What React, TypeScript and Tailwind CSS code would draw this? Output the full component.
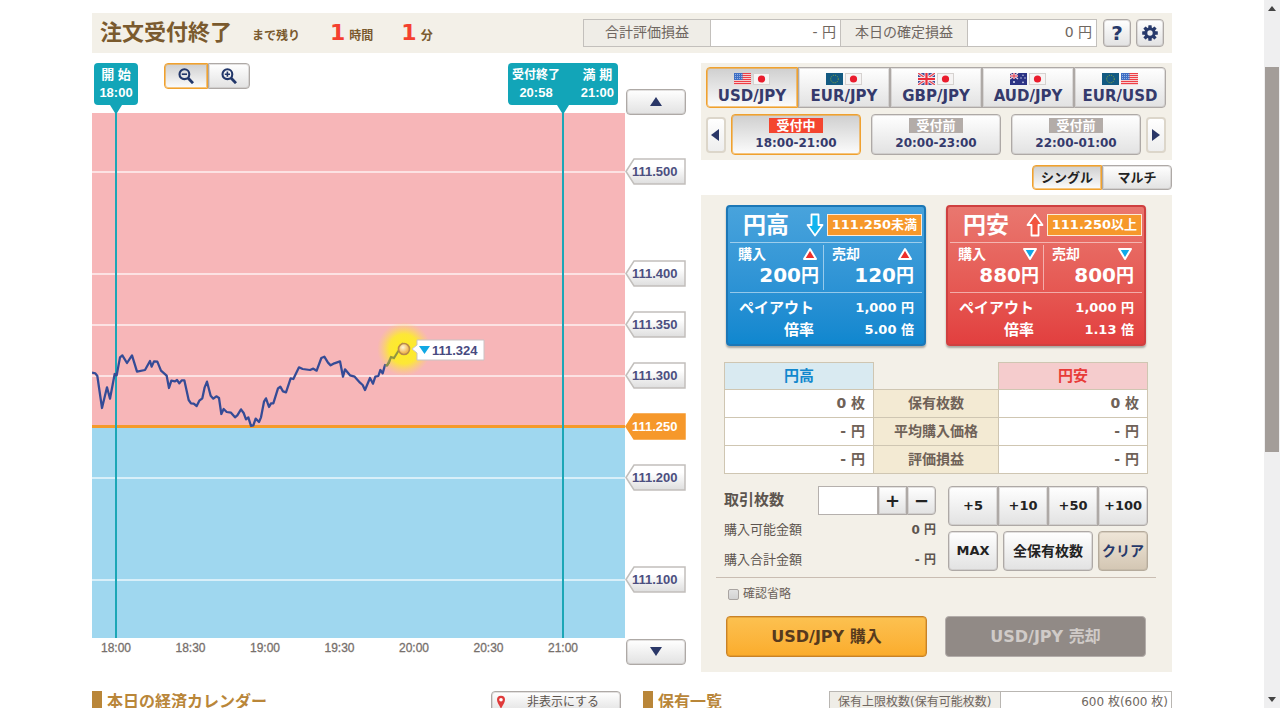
import { useState } from "react";
import type { ReactNode } from "react";

const raised = "bg-linear-to-b from-white to-[#e2e2e2] border border-[#aea9a6] ring-1 ring-inset ring-[#aea9a6]/35";
const pressed = "bg-linear-to-b from-[#cfcfcf] to-[#fcfcfc] border border-[#f0a12e] ring-1 ring-inset ring-[#f0a12e]/60";

type Code = "US" | "JP" | "EU" | "GB" | "AU";

function Flag({ code }: { code: Code }) {
  return (
    <svg viewBox="0 0 17 12" className="h-3 w-[17px]" aria-hidden="true">
      {code === "US" && (
        <>
          <rect width="17" height="12" fill="#f7dfe0" />
          {[0, 2, 4, 6, 8, 10].map((y) => (
            <rect key={y} y={y} width="17" height="1.1" fill="#ee3e46" />
          ))}
          <rect width="8.5" height="7" fill="#3f6fc4" />
          {[1.5, 3.5, 5.5].map((y) => (
            <path key={y} d={`M1 ${y}h7`} stroke="#b9d0f2" strokeWidth=".7" strokeDasharray="1 1" />
          ))}
        </>
      )}
      {code === "JP" && (
        <>
          <rect x=".5" y=".5" width="16" height="11" fill="#f6f4f4" stroke="#d6d2d0" />
          <circle cx="8.5" cy="6" r="3.6" fill="#ea1c2d" />
        </>
      )}
      {code === "EU" && (
        <>
          <rect width="17" height="12" fill="#135a82" />
          <circle cx="8.5" cy="6" r="3.8" fill="none" stroke="#8ba83c" strokeWidth="1" strokeDasharray="1 1" />
        </>
      )}
      {code === "GB" && (
        <>
          <rect width="17" height="12" fill="#3d4f9c" />
          <path d="M0 0l17 12M17 0L0 12" stroke="#f3e3e8" strokeWidth="3" />
          <path d="M0 0l17 12M17 0L0 12" stroke="#e8434f" strokeWidth="1.2" />
          <path d="M8.5 0v12M0 6h17" stroke="#f3e3e8" strokeWidth="4" />
          <path d="M8.5 0v12M0 6h17" stroke="#ea2f3c" strokeWidth="2.2" />
        </>
      )}
      {code === "AU" && (
        <>
          <rect width="17" height="12" fill="#2b3384" />
          <path d="M0 0l8 6M8 0L0 6" stroke="#eddbe6" strokeWidth="1.2" />
          <path d="M4 0v6M0 3h8" stroke="#eddbe6" strokeWidth="2" />
          <path d="M4 0v6M0 3h8" stroke="#e03848" strokeWidth="1" />
          <g fill="#dfe2f4">
            <circle cx="4" cy="9" r="1" />
            <circle cx="13" cy="2.3" r=".7" />
            <circle cx="11" cy="5" r=".7" />
            <circle cx="15" cy="5" r=".7" />
            <circle cx="13" cy="9.4" r=".8" />
          </g>
        </>
      )}
    </svg>
  );
}

function Triangle({ dir, className = "" }: { dir: "up" | "down" | "left" | "right"; className?: string }) {
  const d = {
    up: "M6 1L12 10H0Z",
    down: "M0 1H12L6 10Z",
    left: "M1 6L9 0V12Z",
    right: "M10 6L2 0V12Z",
  }[dir];
  return (
    <svg viewBox="0 0 12 12" className={`size-3 ${className}`} fill="#2a3768" aria-hidden="true">
      <path d={d} />
    </svg>
  );
}

function Magnifier({ plus }: { plus?: boolean }) {
  return (
    <svg viewBox="0 0 16 16" className="size-4" fill="none" stroke="#22376a" aria-hidden="true">
      <circle cx="6.4" cy="6.2" r="4.9" strokeWidth="2.1" />
      <path d="M10 10L15 15.2" strokeWidth="2.8" />
      <path d={plus ? "M3.8 6.2h5.2M6.4 3.6v5.2" : "M3.8 6.2h5.2"} strokeWidth="1.6" />
    </svg>
  );
}

function Gear() {
  return (
    <svg viewBox="-8 -8 16 16" className="size-4" aria-hidden="true">
      <g fill="#27396a">
        {[0, 45, 90, 135].map((a) => (
          <rect key={a} x="-1.7" y="-7.8" width="3.4" height="15.6" rx=".5" transform={`rotate(${a})`} />
        ))}
        <circle r="5.7" />
      </g>
      <circle r="2.7" fill="#f0f0f0" />
    </svg>
  );
}

function Header() {
  return (
    <header className="flex h-10 items-center bg-[#f3f0e8] pr-2 pl-2 text-[#7a5a2e]">
      <div className="flex items-baseline font-bold leading-8">
        <h1 className="text-[22px]">注文受付終了</h1>
        <span className="ml-5 text-xs">まで残り</span>
        <strong className="ml-[30px] text-[22px] text-[#f4402f]">1</strong>
        <span className="ml-1 text-xs">時間</span>
        <strong className="ml-7 text-[22px] text-[#f4402f]">1</strong>
        <span className="ml-1 text-xs">分</span>
      </div>
      <dl className="ml-auto grid h-7 grid-cols-[127px_129px_128px_128px] border border-[#c3c0bc] text-sm leading-6 text-[#6f6761]">
        <dt className="border-r border-[#c3c0bc] bg-[#efede7] text-center">合計評価損益</dt>
        <dd className="bg-white pr-1 text-right">- 円</dd>
        <dt className="border-x border-[#c3c0bc] bg-[#efede7] text-center">本日の確定損益</dt>
        <dd className="bg-white pr-1 text-right">0 円</dd>
      </dl>
      <button aria-label="ヘルプ" className={`${raised} ml-[6px] flex size-7 items-center justify-center rounded text-xl leading-none font-bold text-[#27396a]`}>
        ?
      </button>
      <button aria-label="設定" className={`${raised} ml-[5px] flex size-7 items-center justify-center rounded`}>
        <Gear />
      </button>
    </header>
  );
}

const trace =
  "36,128 46,130 52,138 66,234 81,172 90,206 104,132 110,136 120,82 127,76 141,99 156,76 171,125 195,120 210,93 215,110 222,94 232,95 243,122 260,137 267,174 274,152 285,154 291,150 298,160 305,151 313,151 326,210 333,220 341,221 350,228 358,212 367,205 374,172 381,155 392,197 400,206 409,199 417,204 424,252 431,237 440,246 453,248 465,262 472,256 483,238 491,249 498,268 505,262 513,288 520,286 527,266 537,276 543,262 552,215 558,205 567,231 573,220 580,220 594,175 601,170 609,184 618,187 632,145 640,147 657,112 668,117 690,120 700,116 710,122 724,84 733,80 744,98 752,106 763,100 780,94 789,140 795,118 810,136 824,140 840,158 848,165 855,180 870,144 879,161 886,140 895,138 901,120 908,130 915,105 922,106 932,82 941,86 955,58 968,40";

const times = ["18:00", "18:30", "19:00", "19:30", "20:00", "20:30", "21:00"];

function Plot() {
  return (
    <svg viewBox="0 0 533 550" className="block w-full" role="img" aria-label="USD/JPY チャート">
      <defs>
        <radialGradient id="glow">
          <stop offset="0" stopColor="#ffee1f" />
          <stop offset=".55" stopColor="#fdec2a" stopOpacity=".9" />
          <stop offset="1" stopColor="#fbd56a" stopOpacity="0" />
        </radialGradient>
        <radialGradient id="bead" cx=".4" cy=".35">
          <stop offset="0" stopColor="#fff6d8" />
          <stop offset="1" stopColor="#f2b957" />
        </radialGradient>
      </defs>
      <rect width="533" height="314" fill="#f7b6b8" />
      <rect y="314" width="533" height="211" fill="#9fd7ef" />
      {[58, 160, 211, 262, 364, 466].map((y) => (
        <rect key={y} y={y} width="533" height="2" fill="#fff" fillOpacity=".6" />
      ))}
      <rect y="312" width="533" height="3" fill="#f49a2b" />
      <rect x="23" width="2" height="525" fill="#1ba6b6" />
      <rect x="470" width="2" height="525" fill="#1ba6b6" />
      <polyline
        points={trace}
        transform="translate(-12 217) scale(.33333)"
        fill="none"
        stroke="#354b96"
        strokeWidth="6.8"
        strokeLinejoin="round"
      />
      <circle cx="312" cy="236" r="27" fill="url(#glow)" />
      <path d="M294 253l3-3 2-6 3 1 5-8 4-7" fill="none" stroke="#8f9442" strokeWidth="2" />
      <circle cx="312" cy="236" r="5.5" fill="url(#bead)" stroke="#b98a4b" strokeWidth="1.6" />
      <path d="M320 236l5-4v-5h67v20h-67v-7z" fill="#fff" stroke="#c9c3c4" />
      <path d="M327 233h11l-5.500 8z" fill="#10a8e4" />
      <text x="340" y="242" fontSize="13" fontWeight="700" fill="#474a80" className="font-['Liberation_Sans',sans-serif]">
        111.324
      </text>
      {times.map((t, i) => (
        <text
          key={t}
          x={24 + i * 74.5}
          y="539"
          textAnchor="middle"
          fontSize="12"
          fill="#77706c"
          stroke="#77706c"
          strokeWidth=".3"
          className="font-['Liberation_Sans',sans-serif]"
        >
          {t}
        </text>
      ))}
    </svg>
  );
}

function TimeBadge({ width, children }: { width: string; children: ReactNode }) {
  return (
    <div className="flex h-[50px] flex-col items-center">
      <div
        className={`${width} flex h-[42px] items-center rounded bg-[#12a5b8] px-1 text-center font-['Liberation_Sans','Noto_Sans_CJK_JP',sans-serif] text-[13px] leading-[18px] font-bold text-white`}
      >
        {children}
      </div>
      <svg viewBox="0 0 12 8" className="h-2 w-3" aria-hidden="true">
        <path d="M0 0H12L7 8H5Z" fill="#12a5b8" />
      </svg>
    </div>
  );
}

function PriceTag({ price, strike }: { price: string; strike?: boolean }) {
  return (
    <div className="relative flex h-[27px] w-full items-center pl-[7px]">
      <svg viewBox="0 0 61 27" className="absolute inset-0 size-full" aria-hidden="true">
        <defs>
          <linearGradient id="tag" x1="0" y1="0" x2="0" y2="1">
            <stop offset=".3" stopColor="#fff" />
            <stop offset="1" stopColor="#dedede" />
          </linearGradient>
        </defs>
        <path
          d="M1 13.500L9 1H60V26H9Z"
          fill={strike ? "#f6982b" : "url(#tag)"}
          stroke={strike ? "#f6982b" : "#c2bfbc"}
          strokeWidth="1.500"
        />
      </svg>
      <span
        className={`relative font-['Liberation_Sans',sans-serif] text-[13px] font-bold ${strike ? "text-white" : "text-[#4c4f80]"}`}
      >
        {price}
      </span>
    </div>
  );
}

const scale = ["111.500", "", "111.400", "111.350", "111.300", "111.250", "111.200", "", "111.100"];

function Chart() {
  const [zoom, setZoom] = useState<"out" | "in">("out");
  return (
    <section className="flex min-w-0 flex-1">
      <div className="min-w-0 flex-1">
        <div className="flex pr-[7px] pl-[2px]">
          <TimeBadge width="w-11 justify-center">
            <div>
              開 始<br />18:00
            </div>
          </TimeBadge>
          <div className="ml-[26px] flex h-[26px]">
            <button
              aria-label="縮小"
              onClick={() => setZoom("out")}
              className={`${zoom === "out" ? pressed : raised} flex w-11 items-center justify-center rounded-l`}
            >
              <Magnifier />
            </button>
            <button
              aria-label="拡大"
              onClick={() => setZoom("in")}
              className={`${zoom === "in" ? pressed : raised} flex w-[42px] items-center justify-center rounded-r`}
            >
              <Magnifier plus />
            </button>
          </div>
          <div className="ml-auto">
            <TimeBadge width="w-[110px] justify-between">
              <div>
                <span className="text-xs">受付終了</span>
                <br />
                20:58
              </div>
              <div>
                満 期<br />21:00
              </div>
            </TimeBadge>
          </div>
        </div>
        <Plot />
      </div>
      <div className="flex w-[61px] shrink-0 flex-col pt-[26px]">
        <button aria-label="上へ" className={`${raised} ml-px flex h-[26px] items-center justify-center rounded-sm`}>
          <Triangle dir="up" />
        </button>
        <div className="pt-[31px] pb-[34px]">
          {scale.map((p, i) => (
            <div key={i} className="flex h-[51px] items-center">
              {p && <PriceTag price={p} strike={p === "111.250"} />}
            </div>
          ))}
        </div>
        <button aria-label="下へ" className={`${raised} ml-px flex h-[26px] items-center justify-center rounded-sm`}>
          <Triangle dir="down" />
        </button>
      </div>
    </section>
  );
}

const pairs: { name: string; flags: [Code, Code] }[] = [
  { name: "USD/JPY", flags: ["US", "JP"] },
  { name: "EUR/JPY", flags: ["EU", "JP"] },
  { name: "GBP/JPY", flags: ["GB", "JP"] },
  { name: "AUD/JPY", flags: ["AU", "JP"] },
  { name: "EUR/USD", flags: ["EU", "US"] },
];

const sessions = [
  { status: "受付中", time: "18:00-21:00", open: true },
  { status: "受付前", time: "20:00-23:00", open: false },
  { status: "受付前", time: "22:00-01:00", open: false },
];

function Selector() {
  const [pair, setPair] = useState("USD/JPY");
  const arrow = "flex h-9 w-5 shrink-0 items-center justify-center rounded-sm border-2 border-[#dcd6ca] bg-linear-to-b from-white to-[#eeeeee]";
  return (
    <div className="bg-[#f3f0e8] pt-1 pr-[6px] pb-[5px] pl-[5px]">
      <div className="flex">
        {pairs.map((p) => (
          <button
            key={p.name}
            onClick={() => setPair(p.name)}
            className={`${pair === p.name ? pressed : raised} flex h-[41px] flex-1 flex-col items-center justify-between pt-[5px] pb-px first:rounded-l last:rounded-r`}
          >
            <span className="flex gap-[2px]">
              <Flag code={p.flags[0]} />
              <Flag code={p.flags[1]} />
            </span>
            <span className="text-[15px] leading-5 font-bold text-[#353a6c]">{p.name}</span>
          </button>
        ))}
      </div>
      <div className="mt-[6px] flex items-center gap-[5px]">
        <button aria-label="前へ" className={arrow}>
          <Triangle dir="left" />
        </button>
        <div className="flex flex-1 gap-[10px]">
          {sessions.map((s) => (
            <button
              key={s.time}
              className={`${s.open ? pressed : raised} flex h-[41px] flex-1 flex-col items-center rounded pt-[3px] font-bold`}
            >
              <span className={`${s.open ? "bg-[#f4452f]" : "bg-[#b3aca8]"} w-[54px] text-[13px] leading-[15px] text-white`}>
                {s.status}
              </span>
              <span className="text-xs leading-5 text-[#353a6c]">{s.time}</span>
            </button>
          ))}
        </div>
        <button aria-label="次へ" className={arrow}>
          <Triangle dir="right" />
        </button>
      </div>
    </div>
  );
}

type Side = {
  name: string;
  limit: string;
  cond: string;
  buy: string;
  sell: string;
  ratio: string;
  high: boolean;
};

function Move({ up }: { up: boolean }) {
  return (
    <svg viewBox="0 0 18 14" className="h-[14px] w-[18px]" aria-hidden="true">
      <path
        d={up ? "M9 2L15 12H3Z" : "M3 2H15L9 12Z"}
        fill={up ? "#ee2f2b" : "#10a8e8"}
        stroke="#fff"
        strokeWidth="2"
        strokeLinejoin="round"
      />
    </svg>
  );
}

function PriceCell({ label, value, up }: { label: string; value: string; up: boolean }) {
  return (
    <div className="pr-1 pl-2">
      <div className="flex items-center justify-between text-sm leading-[18px]">
        {label}
        <Move up={up} />
      </div>
      <div className="text-right text-xl leading-6">
        {value}
        <span className="text-lg leading-6">円</span>
      </div>
    </div>
  );
}

function Card({ side }: { side: Side }) {
  const tone = side.high
    ? "border-[#1c77b6] from-[#48a3dc] to-[#0f87cf]"
    : "border-[#cf4040] from-[#e9776f] to-[#e23f3f]";
  return (
    <button
      className={`${tone} min-w-0 flex-1 rounded border-2 bg-linear-to-b px-[2px] text-left font-bold text-white shadow-[0_2px_2px_rgba(0,0,0,0.3)]`}
    >
      <div className="flex h-9 items-center border-b border-white/50">
        <span className="pl-[13px] text-[23px] leading-8">{side.name}</span>
        <svg viewBox="0 0 18 24" className="ml-auto h-6 w-[18px]" aria-hidden="true">
          <path
            d="M5.500 1.500H12.500V12H16.500L9 22.500L1.500 12H5.500Z"
            transform={side.high ? undefined : "rotate(180 9 12)"}
            fill={side.high ? "#12b4ee" : "#f2553f"}
            stroke="#fff"
            strokeWidth="1.800"
            strokeLinejoin="round"
          />
        </svg>
        <span className="ml-[3px] border border-white/80 bg-[#f6982b] px-1 text-[13px] leading-5 whitespace-nowrap">
          {side.limit}
          {side.cond}
        </span>
      </div>
      <div className="grid h-[50px] grid-cols-2 divide-x divide-white/50 border-b border-white/50 py-[2px] pr-1">
        <PriceCell label="購入" value={side.buy} up={side.high} />
        <PriceCell label="売却" value={side.sell} up={side.high} />
      </div>
      <div className="grid h-[51px] grid-cols-[84px_1fr] content-center pr-2 text-right text-[15px] leading-[22px]">
        <span>ペイアウト</span>
        <span className="text-[13px] leading-[22px]">1,000 円</span>
        <span>倍率</span>
        <span className="text-[13px] leading-[22px]">{side.ratio} 倍</span>
      </div>
    </button>
  );
}

const holdings = [
  ["0 枚", "保有枚数"],
  ["- 円", "平均購入価格"],
  ["- 円", "評価損益"],
];

function Holdings() {
  const line = "border border-[#cfc6b2]";
  return (
    <table className="mt-4 w-full table-fixed border-collapse text-[15px] leading-[26px] font-bold text-[#6f6258]">
      <thead>
        <tr>
          <th className={`${line} w-[149px] bg-[#d9eaf1] text-[#1187cd]`}>円高</th>
          <td />
          <th className={`${line} w-[149px] bg-[#f5cccd] text-[#e83a38]`}>円安</th>
        </tr>
      </thead>
      <tbody>
        {holdings.map(([v, label]) => (
          <tr key={label}>
            <td className={`${line} bg-white pr-2 text-right text-sm leading-[27px]`}>{v}</td>
            <th className={`${line} bg-[#f3ead3] text-sm leading-[27px]`}>{label}</th>
            <td className={`${line} bg-white pr-2 text-right text-sm leading-[27px]`}>{v}</td>
          </tr>
        ))}
      </tbody>
    </table>
  );
}

function OrderForm() {
  const [qty, setQty] = useState("");
  const add = (n: number) => setQty(String(Math.max(0, Number(qty) + n)));
  return (
    <div className="mt-3 flex items-start gap-3 text-[#5d554f]">
      <div className="flex-1">
        <div className="flex h-[29px] items-center">
          <label htmlFor="qty" className="flex-1 text-[15px] font-bold">
            取引枚数
          </label>
          <input
            id="qty"
            value={qty}
            onChange={(e) => setQty(e.target.value)}
            className="h-full w-[60px] border border-[#b5b0ad] bg-white px-1 text-right text-sm"
          />
          <button aria-label="増やす" onClick={() => add(1)} className={`${raised} flex h-full w-[29px] items-center justify-center text-lg leading-none font-bold text-[#222]`}>
            +
          </button>
          <button aria-label="減らす" onClick={() => add(-1)} className={`${raised} flex h-full w-[29px] items-center justify-center rounded-r text-lg leading-none font-bold text-[#222]`}>
            −
          </button>
        </div>
        <dl className="grid grid-cols-2 text-[13px] leading-[30px]">
          <dt>購入可能金額</dt>
          <dd className="text-right text-xs leading-[30px] font-bold">0 円</dd>
          <dt>購入合計金額</dt>
          <dd className="text-right text-xs leading-[30px] font-bold">- 円</dd>
        </dl>
      </div>
      <div className="w-[200px] shrink-0 text-[13px] font-bold text-[#222]">
        <div className="flex h-10">
          {[5, 10, 50, 100].map((n) => (
            <button key={n} onClick={() => add(n)} className={`${raised} w-[50px] whitespace-nowrap first:rounded-l last:rounded-r`}>
              +{n}
            </button>
          ))}
        </div>
        <div className="mt-[5px] flex h-10 justify-between">
          <button className={`${raised} w-[50px] rounded`}>MAX</button>
          <button className={`${raised} w-[90px] rounded text-sm`}>全保有枚数</button>
          <button onClick={() => setQty("")} className="w-[50px] rounded border border-[#b5ab9c] bg-linear-to-b from-[#efe6d8] to-[#d3c6b3] text-sm text-[#27396a] ring-1 ring-[#b5ab9c]/40 ring-inset">
            クリア
          </button>
        </div>
      </div>
    </div>
  );
}

function OrderPanel() {
  const [mode, setMode] = useState("シングル");
  return (
    <section className="w-[471px] shrink-0">
      <Selector />
      <div className="mt-[5px] flex h-[25px] justify-end text-[13px] font-bold text-[#222]">
        {["シングル", "マルチ"].map((m) => (
          <button key={m} onClick={() => setMode(m)} className={`${mode === m ? pressed : raised} w-[70px] leading-5 first:rounded-l last:rounded-r`}>
            {m}
          </button>
        ))}
      </div>
      <div className="mt-[5px] bg-[#f3f0e8] pt-[10px] pr-4 pb-[15px] pl-[15px]">
        <div className="pr-2 pl-2">
          <div className="flex gap-5 px-[2px]">
            <Card side={{ name: "円高", limit: "111.250", cond: "未満", buy: "200", sell: "120", ratio: "5.00", high: true }} />
            <Card side={{ name: "円安", limit: "111.250", cond: "以上", buy: "880", sell: "800", ratio: "1.13", high: false }} />
          </div>
          <Holdings />
          <OrderForm />
        </div>
        <hr className="mt-[2px] border-[#c9bdb2]" />
        <label className="mt-[6px] flex items-center gap-1 pl-3 text-xs leading-5 text-[#6b625b]">
          <input
            type="checkbox"
            className="size-[11px] appearance-none rounded-xs border border-[#a9a4a1] bg-linear-to-b from-[#e2e2e2] to-[#d2d2d2] checked:from-[#f0a12e]"
          />
          確認省略
        </label>
        <div className="mt-3 flex gap-[18px] px-[10px] text-base font-bold">
          <button className="h-[41px] flex-1 rounded border border-[#c98226] bg-linear-to-b from-[#fcc150] to-[#fbac2b] text-[#573a1d] ring-1 ring-[#c98226]/40 ring-inset">
            USD/JPY 購入
          </button>
          <button className="h-[41px] flex-1 rounded-sm border border-[#b3adaa] bg-[#918a86] text-[#d0cbc8]">
            USD/JPY 売却
          </button>
        </div>
      </div>
    </section>
  );
}

function Lower() {
  const heading = "border-l-[10px] border-[#b98639] pl-[5px] text-base leading-[22px] font-bold text-[#b98639]";
  return (
    <div className="mt-[19px] flex items-start">
      <h2 className={heading}>本日の経済カレンダー</h2>
      <button className={`${raised} ml-auto flex h-[22px] w-[130px] items-center rounded-sm pl-1 text-xs text-[#5d554f]`}>
        <svg viewBox="0 0 10 14" className="h-[14px] w-[10px]" aria-hidden="true">
          <path d="M5 14C3.500 10 1 8 1 4.800a4 4 0 0 1 8 0C9 8 6.500 10 5 14Z" fill="#e03a3a" />
          <circle cx="5" cy="4.800" r="1.800" fill="#fff" />
        </svg>
        <span className="flex-1 text-center">非表示にする</span>
      </button>
      <section className="ml-[22px] flex w-[529px] items-start justify-between">
        <h2 className={heading}>保有一覧</h2>
        <dl className="grid w-[343px] grid-cols-2 border border-[#b9b6b2] text-xs leading-5 text-[#6f6761]">
          <dt className="border-r border-[#b9b6b2] bg-[#efede7] text-center whitespace-nowrap">保有上限枚数(保有可能枚数)</dt>
          <dd className="bg-white pr-[3px] text-right">600 枚(600 枚)</dd>
        </dl>
      </section>
    </div>
  );
}

function ScrollTrack() {
  return (
    <div className="flex w-4 shrink-0 flex-col items-center bg-[#efeff0]" aria-hidden="true">
      <div className="flex h-[67px] pt-[6px]">
        <svg viewBox="0 0 8 5" className="h-[5px] w-2"><path d="M4 0L8 5H0Z" fill="#444" /></svg>
      </div>
      <div className="h-[385px] w-[14px] bg-[#a39d99]" />
      <svg viewBox="0 0 8 5" className="mt-auto mb-[6px] h-[5px] w-2"><path d="M0 0H8L4 5Z" fill="#444" /></svg>
    </div>
  );
}

export default function App() {
  return (
    <div className="flex h-screen bg-white font-['DejaVu_Sans','Noto_Sans_CJK_JP',sans-serif]">
      <main className="min-w-0 flex-1 overflow-hidden pt-[13px]">
        <div className="mx-auto max-w-[1080px]">
          <Header />
          <div className="mt-[10px] flex items-start gap-[15px]">
            <Chart />
            <OrderPanel />
          </div>
          <Lower />
        </div>
      </main>
      <ScrollTrack />
    </div>
  );
}
